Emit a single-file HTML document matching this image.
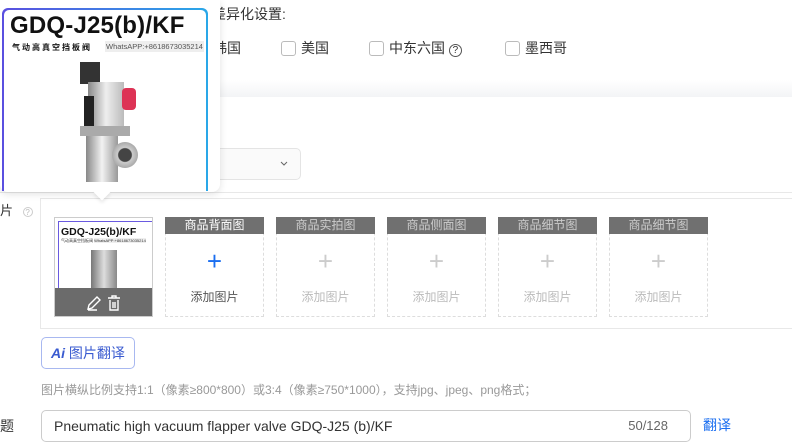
<!DOCTYPE html>
<html><head><meta charset="utf-8"><style>
*{margin:0;padding:0;box-sizing:border-box}
body{width:792px;height:448px;overflow:hidden;background:#fff;font-family:"Liberation Sans","Noto Sans CJK SC",sans-serif;color:#333;position:relative;font-size:13px}
.a{position:absolute}
.cb{display:inline-block;width:15px;height:15px;border:1px solid #bbb;border-radius:3px;vertical-align:-3px;margin-right:5px}
.th{position:absolute;top:217px;width:99px;height:100px;border:1px dashed #ddd}
.th .h{height:17px;background:#707070;color:#fff;font-size:12px;text-align:center;line-height:17px;margin:-1px -1px 0}
.th .p{text-align:center;font-size:26px;color:#ccc;line-height:26px;margin-top:14px;font-weight:300}
.th .t{text-align:center;font-size:12px;color:#bbb;margin-top:14px}
.th.g .h{color:#ccc}
</style></head><body>
<div class="a" style="left:0;top:80px;width:792px;height:17px;background:linear-gradient(#fff,#f3f4f6)"></div>
<div class="a" style="left:212px;top:4px;font-size:14px">差异化设置:</div>
<div class="a" style="left:213px;top:38px;font-size:14px">韩国</div>
<div class="a" style="left:281px;top:38px;font-size:14px"><span class="cb"></span>美国</div>
<div class="a" style="left:369px;top:38px;font-size:14px"><span class="cb"></span>中东六国 <span style="display:inline-block;width:13px;height:13px;border:1px solid #555;border-radius:50%;font-size:10px;line-height:11px;text-align:center;vertical-align:0px">?</span></div>
<div class="a" style="left:505px;top:38px;font-size:14px"><span class="cb"></span>墨西哥</div>
<div class="a" style="left:190px;top:148px;width:111px;height:32px;border:1px solid #e4e4e4;border-radius:5px;background:#fafafa"><svg class="a" style="right:12px;top:12px" width="8" height="6"><path d="M1 1l3 3 3-3" stroke="#666" fill="none"/></svg></div>
<div class="a" style="left:0;top:192px;width:792px;height:1px;background:#e8e8e8"></div>
<div class="a" style="left:40px;top:198px;width:760px;height:131px;border:1px solid #e8e8e8;border-right:none"></div>
<div class="a" style="left:0;top:200px;font-size:13px">片 <span style="color:#bbb;font-size:8px;border:1px solid #ccc;border-radius:50%;display:inline-block;width:10px;height:10px;line-height:9px;text-align:center;margin-left:6px">?</span></div>
<div class="a" style="left:54px;top:217px;width:99px;height:100px;border:1px solid #ccc;background:#fff;overflow:hidden">
 <div style="margin:3px 0 0 3px;height:100px;border-left:1px solid #6a5ae0;border-top:1px solid #6a5ae0;padding:4px 2px">
 <div style="font-size:10.5px;font-weight:bold;color:#111">GDQ-J25(b)/KF</div>
 <div style="font-size:4px;color:#333;white-space:nowrap">气动高真空挡板阀 <span style="background:#eee">WhatsAPP:+8618673035214</span></div>
 <div style="margin:6px 0 0 30px;width:26px;height:50px;background:linear-gradient(90deg,#777,#ddd,#888)"></div></div>
 <div class="a" style="left:0;bottom:0;width:99px;height:28px;background:#6b6b6b"></div>
 <svg class="a" style="left:30px;bottom:4px" width="40" height="18" fill="none" stroke="#fff" stroke-width="1.4"><path d="M3 15l1-4 8-8 3 3-8 8z M3 16h9"/><path d="M23 4h12 M27 4v-2h4v2 M25 6v10h8v-10 M28 8v6 M30 8v6"/></svg>
</div>
<div class="th" style="left:165px"><div class="h">商品背面图</div><div class="p" style="color:#1a6ef0">+</div><div class="t" style="color:#555">添加图片</div></div>
<div class="th g" style="left:276px"><div class="h">商品实拍图</div><div class="p">+</div><div class="t">添加图片</div></div>
<div class="th g" style="left:387px"><div class="h">商品侧面图</div><div class="p">+</div><div class="t">添加图片</div></div>
<div class="th g" style="left:498px"><div class="h">商品细节图</div><div class="p">+</div><div class="t">添加图片</div></div>
<div class="th g" style="left:609px"><div class="h">商品细节图</div><div class="p">+</div><div class="t">添加图片</div></div>
<div class="a" style="left:41px;top:337px;width:94px;height:32px;border:1px solid #a8b8f0;border-radius:5px;font-size:14px;line-height:30px;padding-left:9px;color:#3a5bd0"><b style="font-style:italic">Ai</b> 图片翻译</div>
<div class="a" style="left:41px;top:381px;font-size:12px;color:#999">图片横纵比例支持1:1（像素≥800*800）或3:4（像素≥750*1000），支持jpg、jpeg、png格式；</div>
<div class="a" style="left:0;top:416px;font-size:14px">题</div>
<div class="a" style="left:41px;top:410px;width:650px;height:32px;border:1px solid #ccc;border-radius:5px;font-size:14px;line-height:30px;padding-left:12px;color:#333">Pneumatic high vacuum flapper valve GDQ-J25 (b)/KF<span class="a" style="right:22px;top:0;font-size:13px;color:#666">50/128</span></div>
<div class="a" style="left:703px;top:415px;font-size:14px;color:#1a6ef0">翻译</div>
<!-- popup -->
<div class="a" style="left:0;top:0;width:220px;height:192px;background:#fff;border-radius:0 0 8px 8px;box-shadow:0 2px 8px rgba(0,0,0,.12)"></div>
<div class="a" style="left:96px;top:186px;width:12px;height:12px;background:#fff;transform:rotate(45deg);box-shadow:2px 2px 3px rgba(0,0,0,.08)"></div>
<div class="a" style="left:2px;top:8px;width:206px;height:183px;border-radius:6px 6px 0 0;background:linear-gradient(90deg,#5a4fe0,#2aa8e8);padding:2px 2px 0 2px">
 <div style="width:100%;height:100%;background:#fff;border-radius:5px 5px 0 0;position:relative;overflow:hidden">
  <div class="a" style="left:6px;top:2px;font-size:24px;font-weight:bold;color:#111;letter-spacing:.2px">GDQ-J25(b)/KF</div>
  <div class="a" style="left:8px;top:32px;font-size:8px;font-weight:bold;color:#111;letter-spacing:2px">气动高真空挡板阀</div>
  <div class="a" style="left:101px;top:31px;font-size:7.5px;color:#555;background:#eee;padding:1px 1px;white-space:nowrap">WhatsAPP:+8618673035214</div>
  <div class="a" style="left:76px;top:52px;width:20px;height:22px;background:#333"></div>
  <div class="a" style="left:84px;top:72px;width:36px;height:46px;background:linear-gradient(90deg,#888,#eee,#bbb)"></div>
  <div class="a" style="left:80px;top:86px;width:10px;height:32px;background:#222"></div>
  <div class="a" style="left:118px;top:78px;width:14px;height:22px;background:#d35;border-radius:4px"></div>
  <div class="a" style="left:76px;top:116px;width:50px;height:10px;background:#aaa"></div>
  <div class="a" style="left:82px;top:126px;width:32px;height:46px;background:linear-gradient(90deg,#888,#f2f2f2,#999)"></div>
  <div class="a" style="left:108px;top:132px;width:26px;height:26px;border-radius:50%;background:radial-gradient(#444 35%,#ccc 40%,#888)"></div>
 </div>
</div>
</body></html>
